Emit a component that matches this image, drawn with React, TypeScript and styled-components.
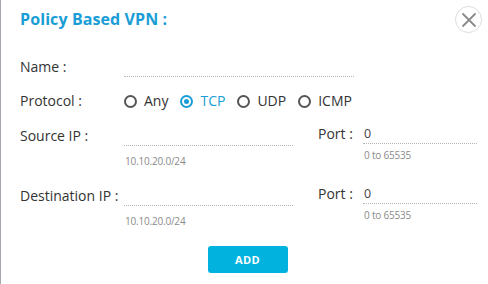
import React, { useState } from "react";
import styled, { createGlobalStyle } from "styled-components";

const Global = createGlobalStyle`
  html, body { margin: 0; padding: 0; background: #fff; }
  body { font-family: "Open Sans", "Liberation Sans", sans-serif; }
  * { box-sizing: border-box; }
`;

const Modal = styled.div`
  width: 488px;
  height: 284px;
  background: #fff;
  border-left: 1px solid #a3a7ae;
  padding: 8px 6px 0 19px;
  display: flex;
  flex-direction: column;
  position: relative;
`;

const Header = styled.div`
  display: flex;
  justify-content: space-between;
  align-items: flex-start;
  height: 50px;
`;

const Title = styled.h2`
  margin: 0;
  font-size: 16px;
  line-height: 22px;
  font-weight: 700;
  color: #1a9dd6;
  letter-spacing: 0.1px;
`;

const Close = styled.button`
  width: 27px;
  height: 27px;
  border-radius: 50%;
  border: 1px solid #dcdcdc;
  background: #fff;
  padding: 0;
  display: flex;
  align-items: center;
  justify-content: center;
  margin-top: -2px;
`;

const Row = styled.div<{ $h: number }>`
  display: flex;
  align-items: flex-start;
  height: ${(p) => p.$h}px;
`;

const Label = styled.label<{ $w: number }>`
  width: ${(p) => p.$w}px;
  flex-shrink: 0;
  font-size: 14px;
  line-height: 18px;
  color: #333;
`;

const Field = styled.div<{ $w: number }>`
  width: ${(p) => p.$w}px;
  display: flex;
  flex-direction: column;
`;

const Input = styled.input`
  width: 100%;
  height: 19px;
  border: none;
  border-bottom: 1px dotted #b5b5b5;
  outline: none;
  font-family: inherit;
  font-size: 12.5px;
  color: #444;
  padding: 0 0 2px 1px;
  background: transparent;
`;

const Hint = styled.span<{ $t: number }>`
  font-size: 10px;
  line-height: 13px;
  color: #8a8a8a;
  margin-top: ${(p) => p.$t}px;
  padding-left: 1px;
  letter-spacing: -0.2px;
`;

const Radios = styled.div`
  display: flex;
  align-items: center;
  gap: 12px;
`;

const RadioItem = styled.label<{ $on: boolean }>`
  display: flex;
  align-items: center;
  gap: 7px;
  font-size: 14px;
  line-height: 18px;
  color: ${(p) => (p.$on ? "#1a9dd6" : "#333")};
  cursor: pointer;
`;

const Dot = styled.span<{ $on: boolean }>`
  width: 13px;
  height: 13px;
  border-radius: 50%;
  border: 2px solid ${(p) => (p.$on ? "#1a9dd6" : "#555")};
  display: flex;
  align-items: center;
  justify-content: center;
  &::after {
    content: "";
    width: 5px;
    height: 5px;
    border-radius: 50%;
    background: ${(p) => (p.$on ? "#1a9dd6" : "transparent")};
  }
`;

const PortGroup = styled.div`
  display: flex;
  align-items: flex-start;
  margin-left: 25px;
  margin-top: -2px;
`;

const Footer = styled.div`
  display: flex;
  justify-content: center;
  padding: 7px 7px 0 0;
`;

const AddButton = styled.button`
  width: 80px;
  height: 27px;
  border: none;
  border-radius: 3px;
  background: #00b2dd;
  color: #fff;
  font-family: inherit;
  font-weight: 700;
  font-size: 11px;
  letter-spacing: 0.3px;
`;

const protocols = ["Any", "TCP", "UDP", "ICMP"];

export default function App() {
  const [proto, setProto] = useState("TCP");
  return (
    <>
      <Global />
      <Modal>
        <Header>
          <Title>Policy Based VPN :</Title>
          <Close aria-label="close">
            <svg width="16" height="16" viewBox="0 0 16 16">
              <path d="M2 2 L14 14 M14 2 L2 14" stroke="#8a8a8a" strokeWidth="1.8" strokeLinecap="round" />
            </svg>
          </Close>
        </Header>
        <Row $h={34}>
          <Label $w={104}>Name :</Label>
          <Field $w={230}>
            <Input />
          </Field>
        </Row>
        <Row $h={35}>
          <Label $w={104}>Protocol :</Label>
          <Radios>
            {protocols.map((p) => (
              <RadioItem key={p} $on={proto === p} onClick={() => setProto(p)}>
                <Dot $on={proto === p} />
                {p}
              </RadioItem>
            ))}
          </Radios>
        </Row>
        <Row $h={60}>
          <Label $w={104}>Source IP :</Label>
          <Field $w={169}>
            <Input />
            <Hint $t={9}>10.10.20.0/24</Hint>
          </Field>
          <PortGroup>
            <Label $w={45}>Port :</Label>
            <Field $w={114}>
              <Input defaultValue="0" />
              <Hint $t={5}>0 to 65535</Hint>
            </Field>
          </PortGroup>
        </Row>
        <Row $h={52}>
          <Label $w={104}>Destination IP :</Label>
          <Field $w={169}>
            <Input />
            <Hint $t={9}>10.10.20.0/24</Hint>
          </Field>
          <PortGroup>
            <Label $w={45}>Port :</Label>
            <Field $w={114}>
              <Input defaultValue="0" />
              <Hint $t={5}>0 to 65535</Hint>
            </Field>
          </PortGroup>
        </Row>
        <Footer>
          <AddButton>ADD</AddButton>
        </Footer>
      </Modal>
    </>
  );
}
